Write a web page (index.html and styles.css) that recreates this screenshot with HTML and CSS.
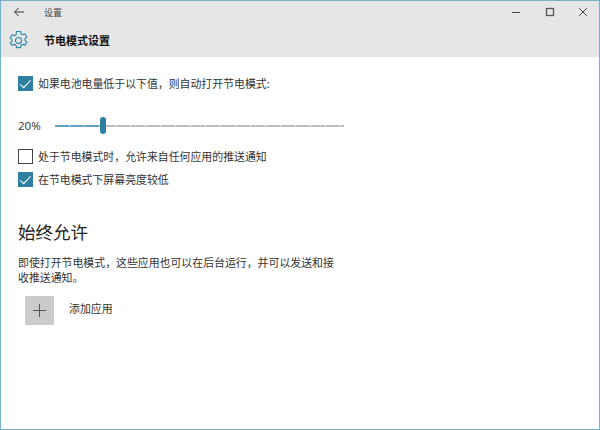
FILE: index.html
```html
<!DOCTYPE html>
<html lang="zh-CN">
<head>
<meta charset="utf-8">
<title>设置</title>
<link rel="stylesheet" href="styles.css">
</head>
<body>
<div class="window">
  <header class="head">
    <div class="titlebar">
      <svg class="back" viewBox="0 0 10 10" width="10" height="10"><path d="M4.500 1 .7 5 4.500 9M.7 5H10" fill="none" stroke="#333" stroke-width="1"/></svg>
      <span class="apptitle">设置</span>
      <div class="controls">
        <svg viewBox="0 0 10 10" width="10" height="10"><path d="M1 5.500H9" stroke="#444" stroke-width="1"/></svg>
        <svg viewBox="0 0 10 10" width="10" height="10"><rect x="1.500" y="1.500" width="7" height="7" fill="none" stroke="#555" stroke-width="1.300"/></svg>
        <svg viewBox="0 0 10 10" width="10" height="10"><path d="M1.200 1.200 8.800 8.800M8.800 1.200 1.200 8.800" stroke="#444" stroke-width="1"/></svg>
      </div>
    </div>
    <div class="pagehead">
      <svg class="gear" viewBox="0 0 20 20" width="19" height="19"><path d="M7.900 1h4.200l.5 2.500 1.700.9 2.400-1 2.100 3.600-2 1.600v1.800l2 1.600-2.100 3.600-2.400-1-1.700.9-.5 2.500H7.900l-.5-2.500-1.700-.9-2.400 1L1.200 13l2-1.600V9.600l-2-1.600 2.100-3.600 2.400 1 1.700-.9z" transform="translate(0 -.5)" fill="none" stroke="#2f86ab" stroke-width="1.200" stroke-linejoin="round"/><circle cx="10" cy="10" r="3.200" fill="none" stroke="#2f86ab" stroke-width="1.200"/></svg>
      <h1 class="pagetitle">节电模式设置</h1>
    </div>
  </header>
  <main class="content">
    <label class="check"><span class="box on"><svg viewBox="0 0 14 14" width="14" height="14"><path d="M1.500 7.500 5 11 12.500 3" fill="none" stroke="#fff" stroke-width="1.100"/></svg></span><span class="checktext">如果电池电量低于以下值，则自动打开节电模式:</span></label>
    <div class="sliderrow">
      <span class="pct">20%</span>
      <div class="slider"><div class="fill"></div><div class="rest"></div><div class="thumb"></div></div>
    </div>
    <label class="check"><span class="box"></span><span class="checktext">处于节电模式时，允许来自任何应用的推送通知</span></label>
    <label class="check second"><span class="box on"><svg viewBox="0 0 14 14" width="14" height="14"><path d="M1.500 7.500 5 11 12.500 3" fill="none" stroke="#fff" stroke-width="1.100"/></svg></span><span class="checktext">在节电模式下屏幕亮度较低</span></label>
    <h2 class="section">始终允许</h2>
    <p class="desc">即使打开节电模式，这些应用也可以在后台运行，并可以发送和接收推送通知。</p>
    <div class="addrow">
      <div class="addbtn"><svg viewBox="0 0 13 13" width="13" height="13"><path d="M6.500 0V13M0 6.500H13" stroke="#555" stroke-width="1"/></svg></div>
      <span class="addlabel">添加应用</span>
    </div>
  </main>
</div>
</body>
</html>
```

FILE: styles.css
```css
* { box-sizing: border-box; }
html, body { margin: 0; padding: 0; }
body {
  width: 600px;
  height: 430px;
  overflow: hidden;
  font-family: "Noto Sans CJK SC", "Liberation Sans", sans-serif;
  color: #222;
  background: #fff;
}
.window {
  width: 600px;
  height: 430px;
  border: 1px solid #76b2c9;
  display: flex;
  flex-direction: column;
}
.head { background: #e6e6e6; height: 56px; flex: none; }
.titlebar { height: 22px; display: flex; align-items: center; padding-left: 13px; }
.back { flex: none; }
.apptitle { margin-left: 20px; font-size: 9px; color: #444; }
.controls { margin-left: auto; display: flex; gap: 23.500px; padding-right: 11px; align-items: center; }
.pagehead { height: 34px; display: flex; align-items: center; padding-left: 8px; }
.gear { flex: none; }
.pagetitle { margin: 0 0 0 16px; font-size: 11px; font-weight: 700; color: #111; }
.content { padding: 19px 0 0 17px; flex: 1; }
.check { display: flex; align-items: center; font-size: 10.900px; height: 15px; color: #333; }
.checktext { position: relative; top: -1px; }
.box {
  width: 15px;
  height: 15px;
  border: 1.500px solid #444;
  margin-right: 5px;
  flex: none;
  display: flex;
  align-items: center;
  justify-content: center;
}
.box.on { background: #2f80a0; border-color: #2f80a0; }
.sliderrow { display: flex; align-items: center; margin-top: 26px; height: 17px; margin-bottom: 15px; }
.pct { font-family: "Open Sans", "Liberation Sans", sans-serif; font-size: 11.500px; width: 37px; color: #333; }
.slider { position: relative; width: 289px; height: 17px; display: flex; align-items: center; }
.fill {
  width: 46px;
  height: 2px;
  background: repeating-linear-gradient(90deg, #5da3bd 0 14px, #b4d3df 14px 15px);
}
.rest {
  flex: 1;
  height: 2px;
  background: repeating-linear-gradient(90deg, #bdbdbd 0 14px, #e6e6e6 14px 15px);
}
.thumb { position: absolute; left: 45px; top: 0; width: 6px; height: 17px; border-radius: 3px; background: #2f80a0; }
.second { margin-top: 8px; }
.section { margin: 32px 0 0; font-size: 17.500px; font-weight: 400; line-height: 26px; color: #222; }
.desc { margin: 10px 0 0; width: 325px; font-size: 10.900px; line-height: 15px; color: #333; }
.addrow { display: flex; align-items: center; margin: 11px 0 0 7px; }
.addbtn { width: 29px; height: 29px; background: #cbcbcb; display: flex; align-items: center; justify-content: center; }
.addlabel { margin-left: 15px; margin-top: -6px; font-size: 10.900px; color: #333; }
```
